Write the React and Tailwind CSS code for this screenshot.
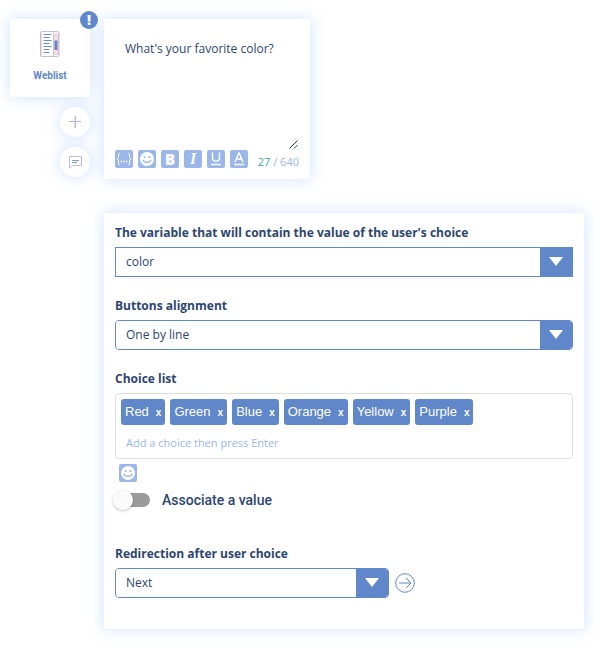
import { useState } from "react";

const cardShadow = "shadow-[0_0_14px_2px_rgba(110,165,250,0.25)]";

function Field({ id, label, options, rounded = "rounded-[4px]", width = "w-full", children }) {
  return (
    <div>
      <label htmlFor={id} className="mb-1 block text-[12px] leading-5 font-bold">
        {label}
      </label>
      <div className="flex items-center gap-1.5">
        <div className={`relative flex h-[30px] overflow-hidden border border-[#5f87c9] ${rounded} ${width}`}>
          <select
            id={id}
            className="w-full appearance-none bg-white pr-10 pl-2.5 text-[12px] outline-none"
          >
            {options.map((o) => (
              <option key={o}>{o}</option>
            ))}
          </select>
          <span className="pointer-events-none absolute inset-y-0 right-0 flex w-8 items-center justify-center bg-[#5f87c9]">
            <svg width="14" height="10" viewBox="0 0 14 10" fill="#fff">
              <path d="M0 0h14L7 9z" />
            </svg>
          </span>
        </div>
        {children}
      </div>
    </div>
  );
}

function Smiley() {
  return (
    <svg width="14" height="14" viewBox="0 0 14 14" fill="none">
      <circle cx="7" cy="7" r="7" fill="#fff" />
      <circle cx="4.6" cy="5" r="1.1" fill="#9bb7ea" />
      <circle cx="9.4" cy="5" r="1.1" fill="#9bb7ea" />
      <path d="M3 8c1 3.200 7 3.200 8 0" stroke="#9bb7ea" strokeWidth="1.2" strokeLinecap="round" />
    </svg>
  );
}

const toolClass =
  "flex h-[18px] w-[18px] items-center justify-center rounded-[2px] bg-[#9bb7ea] leading-none text-white";

function Toolbar() {
  return (
    <div className="flex gap-[5px]">
      <button type="button" aria-label="Insert variable" className={toolClass}>
        <svg width="16" height="14" viewBox="0 0 16 14" fill="none" stroke="#fff" strokeWidth="1">
          <path d="M4 1.500H3.200Q2.500 1.500 2.500 2.500V5.500L1 7l1.500 1.500V11.500q0 1 .7 1H4M12 1.500h.8q.7 0 .7 1V5.500L15 7l-1.500 1.500v3q0 1-.7 1H12" />
          <path d="M4.500 9.500h7" strokeDasharray="1.500 1.200" strokeWidth="1.300" />
        </svg>
      </button>
      <button type="button" aria-label="Insert emoji" className={toolClass}>
        <Smiley />
      </button>
      <button type="button" aria-label="Bold" className={toolClass}>
        <span className="text-[15px] font-extrabold">B</span>
      </button>
      <button type="button" aria-label="Italic" className={toolClass}>
        <span className="font-['Liberation_Serif',serif] text-[16px] font-bold italic">I</span>
      </button>
      <button type="button" aria-label="Underline" className={toolClass}>
        <svg width="12" height="14" viewBox="0 0 12 14" fill="none" stroke="#fff" strokeWidth="1.400">
          <path d="M2.500.5v5.500c0 4.200 7 4.200 7 0V.5M1 12.500h10" />
        </svg>
      </button>
      <button type="button" aria-label="Text color" className={toolClass}>
        <svg width="12" height="14" viewBox="0 0 12 14" fill="none" stroke="#fff" strokeWidth="1.400">
          <path d="M2 10 6 .8 10 10M3.500 7h5M1 12.500h10" />
        </svg>
      </button>
    </div>
  );
}

function NotebookIcon() {
  return (
    <svg width="20" height="26" viewBox="0 0 20 26" fill="none">
      <path d="M2 .5h15.500q1.500 0 1.500 1.500v22q0 1.500-1.500 1.500H2q-1.500 0-1.500-1.500V2Q.5.5 2 .5z" fill="#fff" stroke="#c3bce0" />
      <path d="M1.500 1v24" stroke="#efd3d0" />
      <path d="M13.500 1v24M18.500 2v22" stroke="#dcc0cf" />
      <path d="M14 5.500 16 2.500l2 3V22l-2 2-2-2z" fill="#f6e8e8" stroke="#dcc0cf" />
      <path d="M14.500 9.500h3V19h-3z" fill="#5f87c9" />
      <path d="M3.500 3.500h8M3.500 6.500h6M3.500 9.500h8M3.500 12.500h6M3.500 15.500h8M3.500 18.500h6M3.500 21.500h6" stroke="#6a8ecd" />
    </svg>
  );
}

const roundButton = `flex h-[30px] w-[30px] items-center justify-center rounded-full bg-white ${cardShadow}`;

export default function App() {
  const [choices, setChoices] = useState(["Red", "Green", "Blue", "Orange", "Yellow", "Purple"]);
  const [draft, setDraft] = useState("");
  const [message, setMessage] = useState("What's your favorite color?");

  const onKeyDown = (e) => {
    if (e.key === "Enter" && draft.trim()) {
      setChoices([...choices, draft.trim()]);
      setDraft("");
    }
  };

  return (
    <main className="flex min-h-screen items-start gap-3.5 bg-white pt-[19px] pr-8 pb-[19px] pl-2.5 font-['Open_Sans',sans-serif] text-[#2c4670]">
      <aside className="flex w-20 shrink-0 flex-col items-end">
        <div className={`relative flex h-[78px] w-full flex-col items-center rounded-[3px] bg-white pt-3 ${cardShadow}`}>
          <NotebookIcon />
          <h1 className="mt-3 font-['Roboto',sans-serif] text-[10px] leading-[14px] font-bold text-[#5f87c9]">
            Weblist
          </h1>
          <span className="absolute -top-2 -right-2 z-10 flex h-[18px] w-[18px] items-center justify-center rounded-full bg-[#5f87c9] text-[14px] leading-none font-extrabold text-white">
            !
          </span>
        </div>
        <button type="button" aria-label="Add" className={`mt-2.5 ${roundButton}`}>
          <svg width="12" height="12" viewBox="0 0 12 12" strokeWidth="1">
            <path d="M5.500 0v12" stroke="#f0d8d6" />
            <path d="M6.500 0v12" stroke="#a9c0ec" />
            <path d="M0 5.500h12" stroke="#b5b2e2" />
          </svg>
        </button>
        <button type="button" aria-label="Comment" className={`mt-2.5 ${roundButton}`}>
          <svg width="13" height="13" viewBox="0 0 13 13" fill="none">
            <path d="M.5 12.200V.5h12v9H3.200z" stroke="#c3b9de" />
            <path d="M3 4.500h7M3 6.500h5" stroke="#7d9dd4" />
          </svg>
        </button>
      </aside>

      <div className="flex min-w-0 flex-1 flex-col items-start gap-[34px]">
        <section className={`w-[206px] rounded-[3px] bg-white p-[11px] ${cardShadow}`}>
          <div className="relative">
            <textarea
              aria-label="Message"
              value={message}
              onChange={(e) => setMessage(e.target.value)}
              className="block h-[120px] w-full resize-none px-2.5 pt-[9px] text-[12px] leading-5 outline-none"
            />
            <svg className="absolute right-px bottom-px" width="9" height="9" viewBox="0 0 9 9" fill="none" stroke="#2c3350">
              <path d="M.5 8.500l8-8M5 8.500l3.500-3.500" />
            </svg>
          </div>
          <div className="flex items-center justify-between">
            <Toolbar />
            <p className="pt-1.5 text-[11px] leading-3 whitespace-nowrap text-[#9bb7ea]">
              <span className="text-[#3fa6a0]">{message.length}</span> / 640
            </p>
          </div>
        </section>

        <section className={`w-full rounded-[3px] bg-white px-[11px] pt-2.5 pb-[31px] ${cardShadow}`}>
          <div className="flex flex-col gap-[19px]">
            <Field
              id="variable"
              label="The variable that will contain the value of the user's choice"
              options={["color"]}
              rounded="rounded-none"
            />
            <Field id="alignment" label="Buttons alignment" options={["One by line", "Side by side"]} />
            <div>
              <label htmlFor="choice" className="mb-1 block text-[12px] leading-5 font-bold">
                Choice list
              </label>
              <div className="rounded-[4px] border border-[#dedede] px-[5px] pt-[5px] pb-1.5">
                <ul className="flex flex-wrap gap-[5px] font-['Liberation_Sans',sans-serif] text-[13px] text-white">
                  {choices.map((c) => (
                    <li key={c} className="flex h-[26px] items-center gap-[7px] rounded-[3px] bg-[#5f87c9] px-1">
                      {c}
                      <button
                        type="button"
                        aria-label={`Remove ${c}`}
                        onClick={() => setChoices(choices.filter((x) => x !== c))}
                        className="pt-px text-[10px] leading-4 font-bold"
                      >
                        x
                      </button>
                    </li>
                  ))}
                </ul>
                <input
                  id="choice"
                  value={draft}
                  onChange={(e) => setDraft(e.target.value)}
                  onKeyDown={onKeyDown}
                  placeholder="Add a choice then press Enter"
                  className="mt-[7px] block h-5 w-full px-[5px] text-[11px] outline-none placeholder:text-[#9bb7ea]"
                />
              </div>
            </div>
          </div>
          <button type="button" aria-label="Insert emoji in choice" className={`mt-[5px] ml-1 ${toolClass}`}>
            <Smiley />
          </button>
          <label className="mt-2 mb-[34px] flex cursor-pointer items-center gap-3 font-['Roboto',sans-serif] text-[14px] leading-5 font-medium">
            <span className="relative flex h-5 w-[35px] items-center">
              <input type="checkbox" className="peer sr-only" />
              <span className="ml-1 h-3.5 w-full rounded-full bg-[#9b9b9b] peer-checked:bg-[#9bb7ea]" />
              <span className="absolute -left-0.5 h-5 w-5 rounded-full bg-[#fafafa] shadow-[0_1px_3px_rgba(0,0,0,0.25)] peer-checked:left-4" />
            </span>
            Associate a value
          </label>
          <Field id="redirect" label="Redirection after user choice" options={["Next"]} width="w-[274px]">
            <button type="button" aria-label="Go to next" className="flex">
              <svg width="20" height="20" viewBox="0 0 20 20" fill="none" stroke="#5f87c9">
                <circle cx="10" cy="10" r="9.300" />
                <path d="M4 10h12M11 5l5 5-5 5" />
              </svg>
            </button>
          </Field>
        </section>
      </div>
    </main>
  );
}
